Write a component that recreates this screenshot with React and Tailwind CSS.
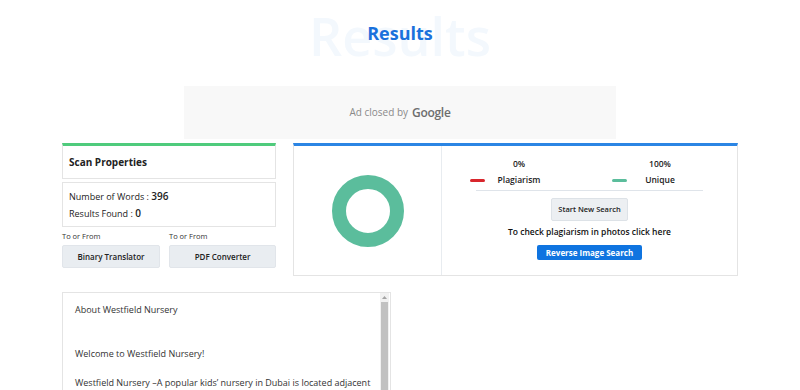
import React from 'react';

const font = { fontFamily: '"Open Sans", "Noto Sans", sans-serif' };

const Donut = () => (
  <svg width="76" height="76" viewBox="0 0 76 76">
    <circle cx="38" cy="38" r="29" fill="none" stroke="#5bbd9c" strokeWidth="14" />
  </svg>
);

const Legend = ({ value, label, color, gap, width }) => (
  <div className="flex items-end">
    <span className={`w-[15px] h-[3px] mb-[3px] rounded-full ${color}`} />
    <div className={`flex flex-col items-center ${gap} ${width}`}>
      <span className="text-[8.5px] leading-[10px] font-semibold text-[#222]">{value}</span>
      <span className="mt-[6px] text-[8.5px] leading-[10px] font-semibold text-[#222]">{label}</span>
    </div>
  </div>
);

const App = () => {
  return (
    <div className="w-[800px] h-[390px] overflow-hidden bg-white" style={font}>
      <div className="relative h-[66px] flex items-center justify-center">
        <span className="absolute inset-x-0 top-[6px] text-center text-[52px] leading-[60px] font-semibold text-[#f3f8fd] select-none">
          Results
        </span>
        <h1 className="relative text-[18px] font-bold text-[#1a71dc]">Results</h1>
      </div>

      <div className="mx-auto mt-[20px] w-[432px] h-[53px] bg-[#f8f8f8] flex items-center justify-center gap-[4px]">
        <span className="text-[10px] text-[#8a8a8a]">Ad closed by</span>
        <span className="text-[12px] font-semibold text-[#6d6d6d] tracking-tight" style={{ fontFamily: '"Open Sans", sans-serif' }}>Google</span>
      </div>

      <div className="mx-auto mt-[4px] w-[676px] flex gap-[17px] items-start">
        <div className="w-[214px] flex flex-col">
          <div className="h-[36px] border border-[#e4e4e4] border-t-[3px] border-t-[#4fcb7c] flex items-center px-[6px]">
            <span className="text-[10px] font-bold text-[#222]">Scan Properties</span>
          </div>
          <div className="mt-[3px] h-[45px] border border-[#e4e4e4] px-[6px] pt-[5px] flex flex-col">
            <p className="text-[9px] leading-[16px] font-medium text-[#222]">
              Number of Words : <span className="text-[10px] font-semibold">396</span>
            </p>
            <p className="text-[9px] leading-[16px] font-medium text-[#222]">
              Results Found : <span className="text-[10px] font-semibold">0</span>
            </p>
          </div>
          <div className="mt-[4px] grid grid-cols-[98px_107px] gap-x-[9px]">
            <span className="text-[7.5px] leading-[10px] text-[#333]">To or From</span>
            <span className="text-[7.5px] leading-[10px] text-[#333]">To or From</span>
            <button className="mt-[4px] h-[23px] rounded-[2px] bg-[#e9edf1] border border-[#e1e5ea] text-[8px] font-semibold text-[#222]">
              Binary Translator
            </button>
            <button className="mt-[4px] h-[23px] rounded-[2px] bg-[#e9edf1] border border-[#e1e5ea] text-[8px] font-semibold text-[#222]">
              PDF Converter
            </button>
          </div>
        </div>

        <div className="w-[445px] h-[133px] border border-[#e4e4e4] border-t-[3px] border-t-[#2b85e4] flex">
          <div className="w-[148px] border-r border-[#e8ecf0] flex items-center justify-center">
            <Donut />
          </div>
          <div className="flex-1 flex flex-col items-center pt-[13px]">
            <div className="self-start pl-[28px] flex">
              <Legend value="0%" label="Plagiarism" color="bg-[#d8262c]" gap="ml-[9px]" width="w-[50px]" />
              <div className="ml-[68px]">
                <Legend value="100%" label="Unique" color="bg-[#5bbd9c]" gap="ml-[13px]" width="w-[40px]" />
              </div>
            </div>
            <div className="mt-[5px] w-[227px] h-px bg-[#dfe4ea]" />
            <button className="mt-[7px] h-[23px] w-[77px] rounded-[2px] bg-[#eceff2] border border-[#dde2e7] text-[7.5px] font-semibold text-[#222]">
              Start New Search
            </button>
            <p className="mt-[6px] text-[8.5px] leading-[10px] font-semibold text-[#111]">
              To check plagiarism in photos click here
            </p>
            <button className="mt-[8px] h-[15px] w-[105px] rounded-[2px] bg-[#0f74e0] text-[8px] font-bold text-white">
              Reverse Image Search
            </button>
          </div>
        </div>
      </div>

      <div className="ml-[62px] mt-[16px] w-[329px] h-[140px] border border-[#e4e4e4] flex">
        <div className="flex-1 pl-[12px] pt-[10px] text-[9px] leading-[14.7px] text-[#333]">
          <p>About Westfield Nursery</p>
          <p className="mt-[29.4px]">Welcome to Westfield Nursery!</p>
          <p className="mt-[14.7px]">Westfield Nursery –A popular kids’ nursery in Dubai is located adjacent</p>
        </div>
        <div className="w-[9px] mr-px bg-[#f1f1f1] flex flex-col">
          <div className="h-[9px] flex items-center justify-center">
            <svg width="5" height="3" viewBox="0 0 5 3"><path d="M0 3 L2.5 0 L5 3 Z" fill="#a3a3a3" /></svg>
          </div>
          <div className="flex-1 mx-px bg-[#c1c1c1]" />
        </div>
      </div>
    </div>
  );
};

export default App;
